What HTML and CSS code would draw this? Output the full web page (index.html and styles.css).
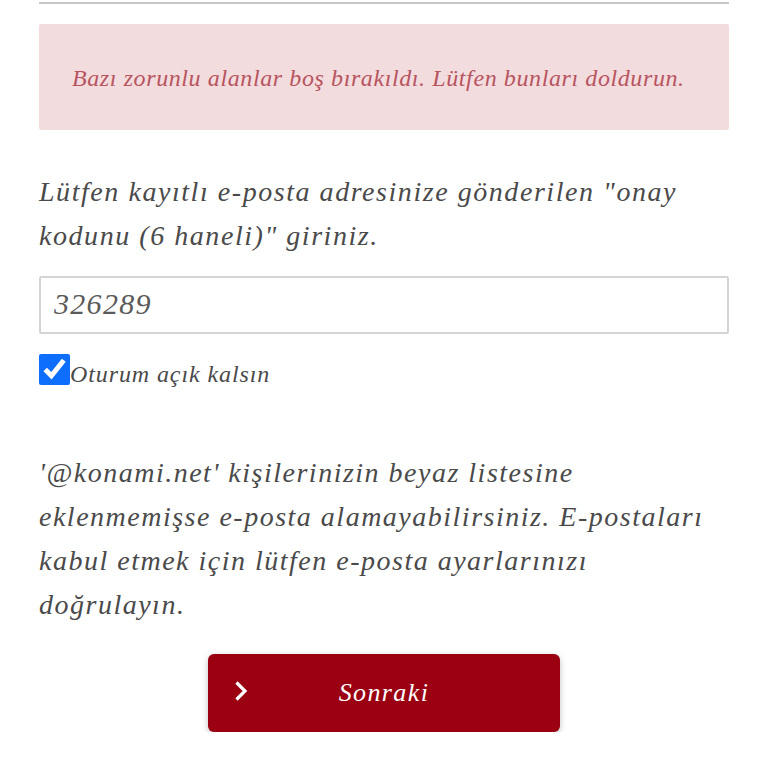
FILE: index.html
```html
<!DOCTYPE html>
<html lang="tr">
<head>
    <meta charset="UTF-8">
    <meta name="viewport" content="width=device-width, initial-scale=1.0">
    <title>Onay kodu</title>
    <link rel="stylesheet" href="styles.css">
</head>
<body>
    <div class="container">
        <hr class="divider">

        <div class="alert">Bazı zorunlu alanlar boş bırakıldı. Lütfen bunları doldurun.</div>

        <form class="code-form">
            <p class="intro">Lütfen kayıtlı e-posta adresinize gönderilen "onay kodunu (6 haneli)" giriniz.</p>

            <input class="code-input" type="text" value="326289">

            <label class="keep-login">
                <input type="checkbox" checked>
                <span>Oturum açık kalsın</span>
            </label>

            <p class="notice">'@konami.net' kişilerinizin beyaz listesine eklenmemişse e-posta alamayabilirsiniz. E-postaları kabul etmek için lütfen e-posta ayarlarınızı doğrulayın.</p>

            <button class="next-button" type="button">
                <svg class="next-icon" viewBox="0 0 14 22" width="14" height="22">
                    <path d="M2.5 2.5l8.5 8.5-8.5 8.5" fill="none" stroke="#fff" stroke-width="3.2"/>
                </svg>
                Sonraki
            </button>
        </form>
    </div>
</body>
</html>
```

FILE: styles.css
```css
* {
    margin: 0;
    padding: 0;
    box-sizing: border-box;
    font-family: 'Liberation Serif', serif;
    font-style: italic;
}

body {
    background-color: #fff;
    color: #4a4a4a;
}

.container {
    padding: 2px 39px 0;
}

.divider {
    border: none;
    border-top: 2px solid #c8c8c8;
    margin-bottom: 20px;
}

.alert {
    height: 106px;
    padding: 3px 0 0 33px;
    display: flex;
    align-items: center;
    background-color: #f2dcde;
    border-radius: 2px;
    color: #b8545f;
    font-size: 24px;
    letter-spacing: 0.6px;
}

.intro {
    margin-top: 40px;
    font-size: 28px;
    line-height: 44px;
    letter-spacing: 1.55px;
}

.code-input {
    display: block;
    width: 100%;
    height: 58px;
    margin-top: 18px;
    padding: 0 13px 3px;
    border: 2px solid #d4d4d4;
    border-radius: 2px;
    color: #5a5a5a;
    font-size: 30px;
    letter-spacing: 1.3px;
}

.keep-login {
    display: flex;
    align-items: center;
    margin-top: 17px;
    font-size: 24px;
    letter-spacing: 0.9px;
}

.keep-login span {
    padding-top: 10px;
}

.keep-login input {
    width: 31px;
    height: 31px;
    accent-color: #0d6efd;
}

.notice {
    margin-top: 63px;
    font-size: 28px;
    line-height: 44px;
    letter-spacing: 1.5px;
}

.next-button {
    position: relative;
    display: block;
    width: 352px;
    height: 78px;
    margin: 27px auto 0;
    border: none;
    border-radius: 6px;
    background-color: #9a0012;
    box-shadow: 0 2px 6px rgba(0, 0, 0, 0.25);
    color: #fff;
    font-size: 26px;
    letter-spacing: 1.4px;
}

.next-icon {
    position: absolute;
    left: 26px;
    top: 26px;
}
```
